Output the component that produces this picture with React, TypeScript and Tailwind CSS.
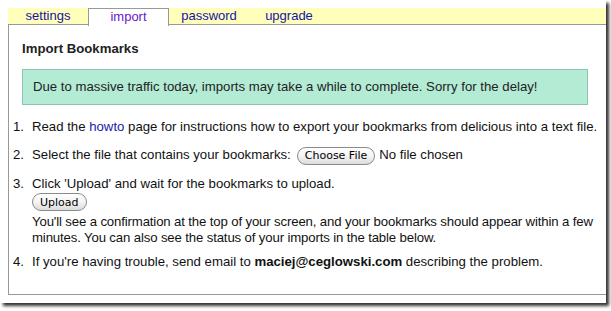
import React from 'react';

const tabs = [
  { label: 'settings', active: false },
  { label: 'import', active: true },
  { label: 'password', active: false },
  { label: 'upgrade', active: false },
];

const MacButton: React.FC<{ children: React.ReactNode }> = ({ children }) => (
  <span className="inline-flex items-center h-[18px] px-[7px] rounded-full border border-[#8a8a8a] bg-gradient-to-b from-white via-[#f4f4f4] to-[#dcdcdc] text-[11px] text-black font-['DejaVu_Sans',sans-serif] leading-none">
    {children}
  </span>
);

export default function App() {
  return (
    <div className="w-[611px] h-[311px] bg-white overflow-hidden font-['Liberation_Sans',Arial,sans-serif] text-[13px] text-[#111]">
      <div className="w-[606px] h-[303px] bg-white shadow-[3px_3px_3px_rgba(0,0,0,0.8)] pl-[8px] pt-[8px]">
        {/* tab bar */}
        <div className="flex h-[17px] bg-[#ffffbb] border-b border-[#999]">
          {tabs.map((t) => (
            <div
              key={t.label}
              className={
                t.active
                  ? 'w-[81px] h-[18px] bg-white border border-b-0 border-[#999] text-[#6a16c8] text-center leading-[15px]'
                  : 'w-[80px] text-[#1515a8] text-center leading-[16px]'
              }
            >
              {t.label}
            </div>
          ))}
        </div>

        {/* content */}
        <div className="h-[270px] border-l border-b border-[#999] pl-[13px] pr-[18px] text-[13.2px]">
          <h2 className="font-bold pt-[16px] leading-[16px] text-[#222]">Import Bookmarks</h2>

          <div className="mt-[12px] h-[36px] border border-[#8fc4b4] bg-[#b3ebd5] flex items-center pl-[10px] text-[#222]">
            Due to massive traffic today, imports may take a while to complete. Sorry for the delay!
          </div>

          <ol className="-ml-[9px] -mr-[18px] mt-[14px] text-[#111]">
            <li className="flex leading-[16px]">
              <span className="w-[19px] shrink-0">1.</span>
              <span className="whitespace-nowrap">
                Read the <span className="text-[#1a1aa8]">howto</span> page for instructions how to export your
                bookmarks from delicious into a text file.
              </span>
            </li>
            <li className="flex items-center mt-[11px] h-[18px]">
              <span className="w-[19px] shrink-0">2.</span>
              <span>Select the file that contains your bookmarks:</span>
              <span className="ml-[6px]">
                <MacButton>Choose File</MacButton>
              </span>
              <span className="ml-[4px]">No file chosen</span>
            </li>
            <li className="flex mt-[12px] leading-[16px]">
              <span className="w-[19px] shrink-0">3.</span>
              <div>
                <div>Click 'Upload' and wait for the bookmarks to upload.</div>
                <div className="mt-[1px]">
                  <MacButton>Upload</MacButton>
                </div>
                <div className="mt-[3px] whitespace-nowrap tracking-[-0.14px]">
                  You'll see a confirmation at the top of your screen, and your bookmarks should appear within a few
                  <br />
                  minutes. You can also see the status of your imports in the table below.
                </div>
              </div>
            </li>
            <li className="flex mt-[8px] leading-[16px]">
              <span className="w-[19px] shrink-0">4.</span>
              <span>
                If you're having trouble, send email to <b>maciej@ceglowski.com</b> describing the problem.
              </span>
            </li>
          </ol>
        </div>
      </div>
    </div>
  );
}
